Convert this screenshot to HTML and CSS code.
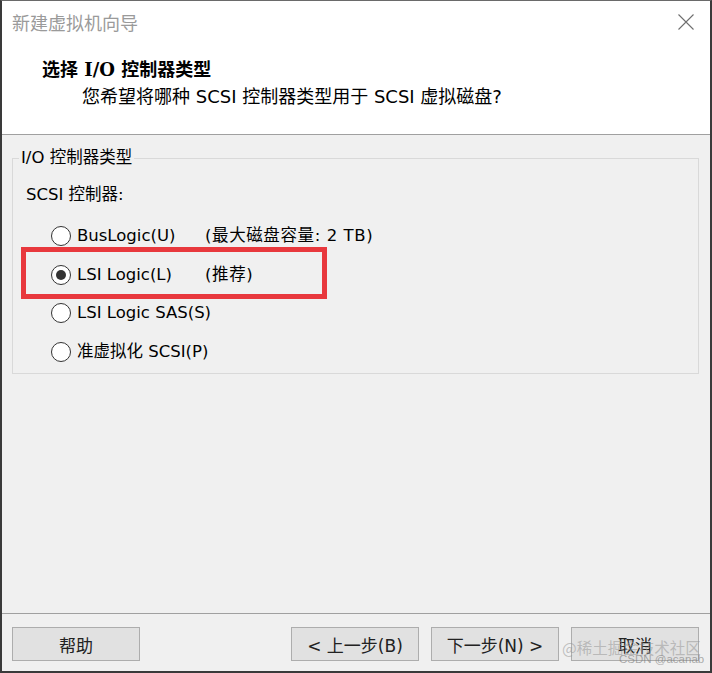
FILE: index.html
```html
<!DOCTYPE html>
<html lang="zh-CN">
<head>
<meta charset="utf-8">
<title>新建虚拟机向导</title>
<link rel="stylesheet" href="styles.css">
</head>
<body>
<div class="window">
  <div class="header">
    <div class="titlebar">
      <span class="title">新建虚拟机向导</span>
      <svg class="close" width="16" height="16" viewBox="0 0 16 16"><path d="M0.5 0.5 L15.5 15.5 M15.5 0.5 L0.5 15.5" stroke="#6e6e6e" stroke-width="1.1" fill="none"/></svg>
    </div>
    <div class="h-title"><span class="h-cjk">选择</span> <span class="h-lat">I/O</span> <span class="h-cjk">控制器类型</span></div>
    <div class="h-sub">您希望将哪种 SCSI 控制器类型用于 SCSI 虚拟磁盘?</div>
  </div>
  <div class="body">
    <fieldset class="group">
      <legend class="legend">I/O 控制器类型</legend>
      <div class="group-label">SCSI 控制器:</div>
      <div class="row">
        <span class="radio"></span>
        <span class="opt">BusLogic(U)</span>
        <span class="note">(最大磁盘容量: 2 TB)</span>
      </div>
      <div class="row">
        <span class="radio checked"></span>
        <span class="opt">LSI Logic(L)</span>
        <span class="note">(推荐)</span>
      </div>
      <div class="row">
        <span class="radio"></span>
        <span class="opt">LSI Logic SAS(S)</span>
      </div>
      <div class="row">
        <span class="radio"></span>
        <span class="opt">准虚拟化 SCSI(P)</span>
      </div>
    </fieldset>
  </div>
  <div class="footer">
    <div class="btn">帮助</div>
    <div class="spacer"></div>
    <div class="btn">&lt; 上一步(B)</div>
    <div class="btn">下一步(N) &gt;</div>
    <div class="btn">取消</div>
  </div>
  <div class="highlight"></div>
  <div class="wm1">@稀土掘金技术社区</div>
  <div class="wm2">CSDN @acanab</div>
</div>
</body>
</html>
```
FILE: styles.css
```css
html, body {
  margin: 0;
  padding: 0;
  background: #ffffff;
}
.window {
  position: relative;
  width: 712px;
  height: 673px;
  box-sizing: border-box;
  border-top: 1px solid #6a6a6a;
  border-left: 2px solid #3a3a3a;
  border-right: 2px solid #3a3a3a;
  border-bottom: 2px solid #3a3a3a;
  display: flex;
  flex-direction: column;
  font-family: "DejaVu Sans", "Noto Sans CJK SC", sans-serif;
  color: #000;
  overflow: hidden;
}
.header {
  height: 134px;
  box-sizing: border-box;
  background: #ffffff;
  border-bottom: 1px solid #a0a0a0;
  flex: none;
}
.titlebar {
  height: 42px;
  display: flex;
  align-items: center;
  justify-content: space-between;
  padding: 0 16px 0 10px;
}
.title {
  font-family: "Noto Sans CJK SC", sans-serif;
  font-size: 18px;
  color: #9a9a9a;
  line-height: 24px;
}
.close {
  display: block;
}
.h-title {
  margin-top: 13px;
  padding-left: 40px;
  font-size: 18px;
  line-height: 24px;
  font-weight: 700;
  color: #000;
}
.h-cjk {
  font-family: "Noto Sans CJK SC", sans-serif;
  font-weight: 700;
}
.h-lat {
  font-family: "DejaVu Serif", "Liberation Serif", serif;
  font-weight: 700;
}
.h-sub {
  margin-top: 3px;
  padding-left: 80px;
  font-size: 18px;
  line-height: 24px;
  color: #000;
}
.body {
  flex: 1;
  background: #f0f0f0;
  padding: 13px 11px 0 10px;
}
.group {
  margin: 0;
  padding: 0 0 2px 0;
  border: 1px solid #d9d9d9;
  min-width: 0;
  font-size: 16.5px;
}
.legend {
  margin-left: 6px;
  padding: 0 2px;
  line-height: 20px;
  font-size: 16.5px;
}
.group-label {
  margin-top: 17px;
  padding-left: 13px;
  line-height: 20px;
}
.row {
  height: 38.5px;
  display: flex;
  align-items: center;
  padding-left: 38px;
}
.group-label + .row {
  margin-top: 12px;
}
.radio {
  width: 20px;
  height: 20px;
  box-sizing: border-box;
  border: 1px solid #333;
  border-radius: 50%;
  background: #fff;
  flex: none;
  display: flex;
  align-items: center;
  justify-content: center;
}
.radio.checked::after {
  content: "";
  width: 10px;
  height: 10px;
  border-radius: 50%;
  background: #333;
}
.opt {
  margin-left: 6px;
  width: 128px;
  flex: none;
  white-space: nowrap;
  line-height: 20px;
}
.note {
  white-space: nowrap;
  line-height: 20px;
  letter-spacing: 0.6px;
}
.footer {
  height: 58px;
  box-sizing: border-box;
  flex: none;
  background: #f0f0f0;
  border-top: 1px solid #a0a0a0;
  display: flex;
  align-items: flex-start;
  padding: 13px 11px 0 10px;
  gap: 12px;
}
.spacer {
  flex: 1;
}
.btn {
  width: 128px;
  height: 34px;
  box-sizing: border-box;
  background: #e1e1e1;
  border: 1px solid #adadad;
  display: flex;
  align-items: center;
  justify-content: center;
  font-size: 17px;
  color: #222;
  white-space: nowrap;
}
.highlight {
  position: absolute;
  left: 19px;
  top: 246px;
  width: 306px;
  height: 52px;
  box-sizing: border-box;
  border: 5px solid #e8383d;
}
.wm1 {
  position: absolute;
  left: 560px;
  top: 636px;
  font-family: "Noto Sans CJK SC", sans-serif;
  font-size: 15.5px;
  line-height: 20px;
  color: rgba(150, 150, 150, 0.55);
  white-space: nowrap;
}
.wm2 {
  position: absolute;
  left: 617px;
  top: 652px;
  font-family: "Liberation Sans", sans-serif;
  font-size: 11.5px;
  line-height: 13px;
  color: rgba(120, 120, 120, 0.6);
  white-space: nowrap;
}
```
